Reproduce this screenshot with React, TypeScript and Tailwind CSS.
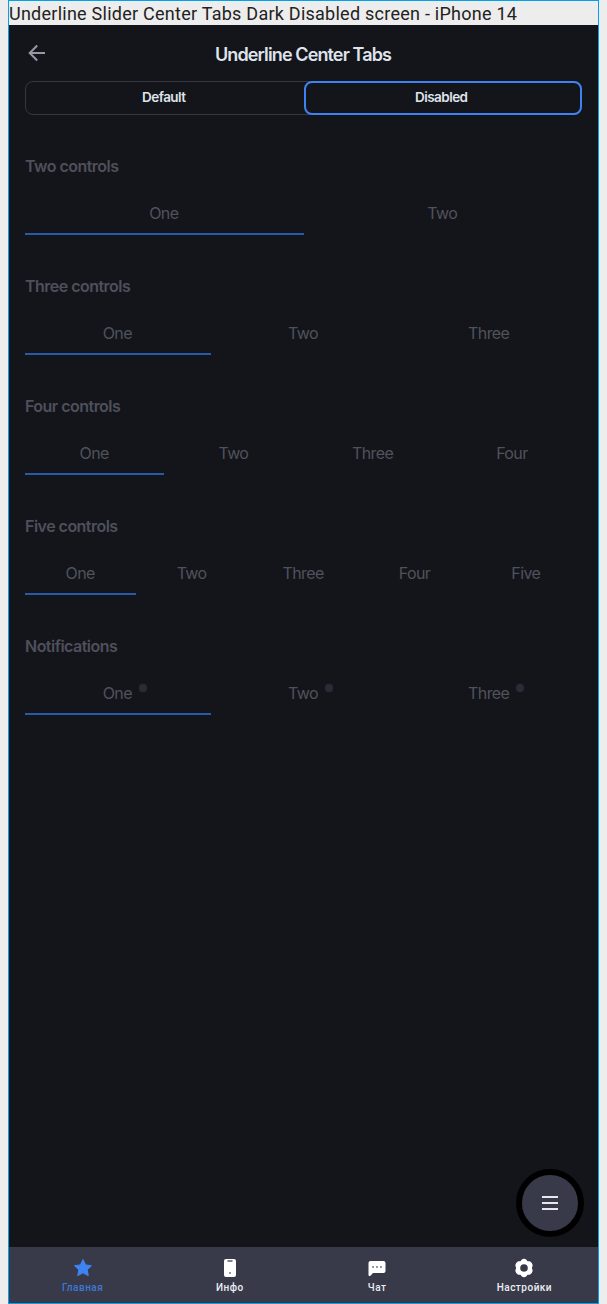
import React from "react";

type Section = { title: string; tabs: string[]; dots?: boolean };

const sections: Section[] = [
  { title: "Two controls", tabs: ["One", "Two"] },
  { title: "Three controls", tabs: ["One", "Two", "Three"] },
  { title: "Four controls", tabs: ["One", "Two", "Three", "Four"] },
  { title: "Five controls", tabs: ["One", "Two", "Three", "Four", "Five"] },
  { title: "Notifications", tabs: ["One", "Two", "Three"], dots: true },
];

function TabSection({ title, tabs, dots }: Section) {
  return (
    <section className="h-[120px]">
      <h2 className="h-5 text-[16px] leading-5 font-semibold tracking-[-0.52px] text-[#4d505b]">{title}</h2>
      <div className="mt-4 flex h-[43px]">
        {tabs.map((tab, i) => (
          <div
            key={tab}
            className={`flex flex-1 justify-center border-b-2 pt-[11px] ${i === 0 ? "border-[#275aa8]" : "border-transparent"}`}
          >
            <span className="relative mr-px h-5 text-[16px] leading-5 tracking-[-0.6px] text-[#4f525d]">
              {tab}
              {dots && <i className="absolute top-[1px] left-[calc(100%+7px)] size-2 rounded-full bg-[#2a2b37] ring-1 ring-[#191a20]" />}
            </span>
          </div>
        ))}
      </div>
    </section>
  );
}

const icons = {
  star: (
    <path
      d="M10 1.5l2.6 5.4 5.9.8-4.3 4.1 1.1 5.9L10 14.8l-5.3 2.9 1.1-5.9L1.500 7.700l5.900-.8z"
      fill="currentColor"
      stroke="currentColor"
      strokeWidth="1"
      strokeLinejoin="round"
    />
  ),
  phone: (
    <>
      <rect x="4" y="1" width="12" height="18" rx="2" fill="currentColor" />
      <path d="M7.500 3h5M9.200 15h1.600" stroke="#555765" strokeWidth="1.300" />
    </>
  ),
  chat: (
    <>
      <path d="M3.500 3h13a2 2 0 0 1 2 2v8a2 2 0 0 1-2 2H6l-2.500 2.700Q1.500 18.500 1.500 17V5a2 2 0 0 1 2-2z" fill="currentColor" />
      <path d="M5.300 9h1.600M9.200 9h1.600M13.100 9h1.600" stroke="#555765" strokeWidth="1.400" />
    </>
  ),
  gear: (
    <path
      fillRule="evenodd"
      fill="currentColor"
      d="M7.600 1.700Q10 0 12.400 1.700L13.500 3.300H15.800Q18.400 4.600 18.700 7.200L17.900 10 18.700 12.800Q18.400 15.400 15.800 16.700H13.500L12.400 18.300Q10 20 7.600 18.300L6.500 16.700H4.200Q1.600 15.400 1.300 12.800L2.100 10 1.300 7.200Q1.600 4.600 4.200 3.300H6.500ZM10 6.200a3.800 3.800 0 1 0 0 7.600 3.800 3.800 0 0 0 0-7.600z"
    />
  ),
};

const navItems = [
  { label: "Главная", icon: icons.star, active: true },
  { label: "Инфо", icon: icons.phone },
  { label: "Чат", icon: icons.chat },
  { label: "Настройки", icon: icons.gear },
];

export default function App() {
  return (
    <div className="h-[1304px] w-[607px] bg-[#ededed] pl-2 font-['Inter',sans-serif]">
      <div className="relative flex h-full w-[591px] flex-col border border-[#00a2ed] bg-[#14151a]">
        <div className="h-6 bg-[#ededed] font-['Roboto',sans-serif] text-[18px] leading-[26px] tracking-[0.25px] whitespace-nowrap text-[#222]">
          Underline Slider Center Tabs Dark Disabled screen - iPhone 14
        </div>
        <header className="relative flex h-14 items-center justify-center pt-[3px] pr-px">
          <svg className="absolute top-[18px] left-[19px] size-[19px]" viewBox="0 0 19 19" fill="none" stroke="#9698a3" strokeWidth="2">
            <path d="M17 10H2M9.200 2.500L1.700 10l7.500 7.500" />
          </svg>
          <h1 className="text-[18px] leading-6 font-semibold tracking-[-0.88px] text-[#dfe3ec]">Underline Center Tabs</h1>
        </header>
        <div className="mx-4 flex h-[34px] rounded-lg border border-[#353642] text-[13.5px] font-semibold tracking-[-0.55px] text-[#dfe3ec]">
          <div className="flex flex-1 items-center justify-center pr-[3px] pb-px">Default</div>
          <div className="-m-px flex w-[278.5px] items-center justify-center rounded-lg border-2 border-[#3d84f2] pr-[3px] pb-px">Disabled</div>
        </div>
        <main className="flex-1 px-4 pt-[41px]">
          {sections.map((s) => (
            <TabSection key={s.title} {...s} />
          ))}
        </main>
        <button className="absolute right-[14px] bottom-[66px] flex size-[68px] items-center justify-center rounded-full border-[6px] border-black bg-[#383a49]">
          <svg className="size-6" viewBox="0 0 24 24" stroke="#e6e8ed" strokeWidth="1.8">
            <path d="M4 6h16M4 12h16M4 18h16" />
          </svg>
        </button>
        <nav className="flex h-14 bg-[#383a49]">
          {navItems.map(({ label, icon, active }) => (
            <div key={label} className={`flex flex-1 flex-col items-center pt-[11px] ${active ? "text-[#3d84f2]" : "text-white"}`}>
              <svg className="size-5" viewBox="0 0 20 20">
                {icon}
              </svg>
              <span className={`mt-1 font-['Roboto',sans-serif] text-[10px] leading-3 font-medium tracking-[0.5px] ${active ? "text-[#3d79d5]" : "text-[#eceef2]"}`}>{label}</span>
            </div>
          ))}
        </nav>
      </div>
    </div>
  );
}
